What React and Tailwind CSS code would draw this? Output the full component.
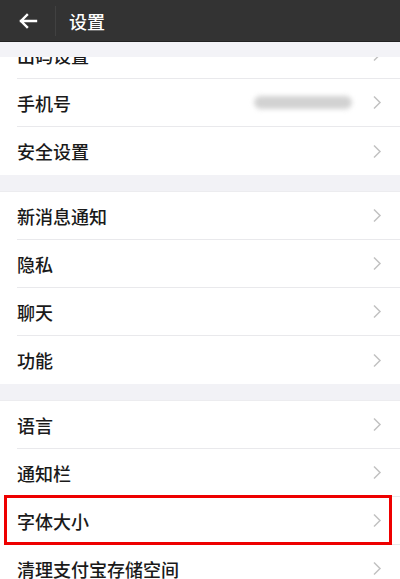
import React from "react";

const Chevron = () => (
  <svg width="10" height="15" viewBox="0 0 10 15" className="shrink-0">
    <polyline points="2,1.5 8,7.5 2,13.5" fill="none" stroke="#c2c2c2" strokeWidth="1.5" />
  </svg>
);

const Row = ({ label, last, children, highlight }) => (
  <div className="relative h-[48px] bg-white flex">
    <div className={"flex-1 ml-[17px] flex items-center pr-[18px] " + (last ? "" : "border-b border-[#e9e9ec]")}>
      <span className="text-[18px] text-[#1a1a1a] font-medium leading-none flex-1">{label}</span>
      {children}
      <Chevron />
    </div>
    {highlight && (
      <span className="absolute left-[4px] right-[8px] top-[-2px] bottom-[0px] border-[3px] border-[#ee0000]" />
    )}
  </div>
);

const Band = () => <div className="h-[17px] bg-[#f2f2f6] border-b border-[#ececef]" />;

export default function App() {
  return (
    <div
      className="w-[400px] h-[579px] overflow-hidden bg-white"
      style={{ fontFamily: '"Noto Sans CJK SC", "Noto Sans", sans-serif' }}
    >
      <div className="h-[42px] bg-[#333333] border-b border-[#222222] flex items-center">
        <div className="w-[55px] flex justify-center">
          <svg width="20" height="16" viewBox="0 0 20 16">
            <path d="M18 8 H3 M9 2 L3 8 L9 14" fill="none" stroke="#ffffff" strokeWidth="2.4" strokeLinecap="square" />
          </svg>
        </div>
        <div className="w-px h-[30px] bg-[#414141]" />
        <span className="ml-[13px] text-[18px] text-white font-medium leading-none">设置</span>
      </div>
      <div className="h-[15px] bg-[#f3f3f7]" />
      <div className="h-[22px] overflow-hidden flex flex-col justify-end">
        <div className="shrink-0">
          <Row label="出码设置" />
        </div>
      </div>
      <Row label="手机号">
        <div className="w-[98px] h-[13px] rounded-full bg-[#d2d2d2] blur-[2.5px] mr-[20px]" />
      </Row>
      <Row label="安全设置" last />
      <Band />
      <Row label="新消息通知" />
      <Row label="隐私" />
      <Row label="聊天" />
      <Row label="功能" last />
      <Band />
      <Row label="语言" />
      <Row label="通知栏" />
      <Row label="字体大小" highlight />
      <Row label="清理支付宝存储空间" />
    </div>
  );
}
